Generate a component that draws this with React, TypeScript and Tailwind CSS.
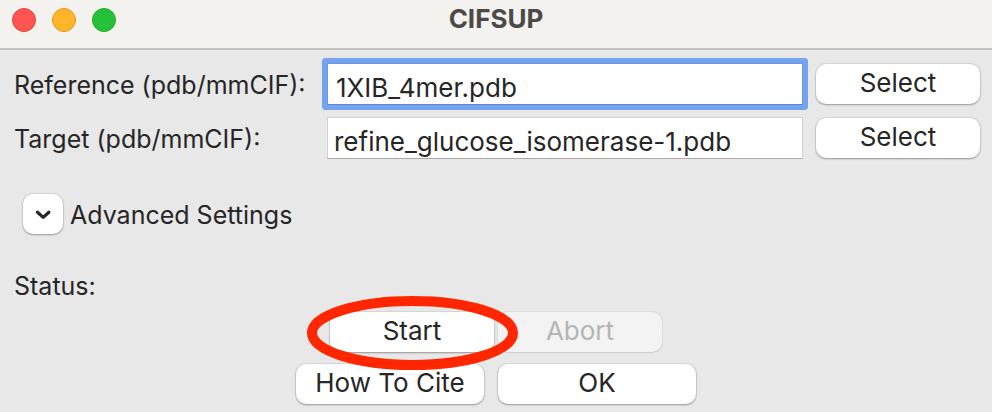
import type { ReactNode } from "react";

const labelText = "pt-0.5 text-[25px] leading-8 text-[#262626]";

function PushButton({
  children,
  className = "",
  disabled = false,
  label,
}: {
  children: ReactNode;
  className?: string;
  disabled?: boolean;
  label?: string;
}) {
  const tone = disabled
    ? "bg-[#f3f3f3] text-[#b5b5b5] shadow-[0_0_1px_1px_rgba(0,0,0,0.05),0_1px_1px_rgba(0,0,0,0.08)]"
    : "bg-white text-[#262626] shadow-[0_0_1px_1px_rgba(0,0,0,0.07),0_1px_2px_rgba(0,0,0,0.3)]";
  return (
    <button
      type="button"
      disabled={disabled}
      aria-label={label}
      className={`flex h-10 items-center justify-center rounded-[10px] pb-0.5 text-[26px] leading-8 ${tone} ${className}`}
    >
      {children}
    </button>
  );
}

function FileRow({
  id,
  label,
  value,
  focused = false,
}: {
  id: string;
  label: string;
  value: string;
  focused?: boolean;
}) {
  const frame = focused
    ? "border border-[#6699ec] border-b-[#5587d3] pl-2 shadow-[0_0_0_5px_#76a3ee] rounded-[1px]"
    : "border border-[#d2d2d2] border-b-[#a9a9a9] pl-1.5";
  return (
    <div className="grid grid-cols-[313px_minmax(0,1fr)_164px] items-center">
      <label htmlFor={id} className={`whitespace-nowrap ${labelText}`}>
        {label}
      </label>
      <input
        id={id}
        type="text"
        defaultValue={value}
        className={`mr-[13px] h-[42px] bg-white pt-1.5 pr-1.5 text-[26px] leading-8 text-[#262626] outline-none ${frame}`}
      />
      <PushButton>Select</PushButton>
    </div>
  );
}

export default function App() {
  return (
    <div className="flex min-h-screen flex-col bg-[#e8e8e8] font-['Inter','Liberation_Sans',sans-serif]">
      <header className="grid h-[50px] grid-cols-[1fr_auto_1fr] items-start border-b-2 border-[#c3c4c2] bg-[#f3f2ee]">
        <div className="flex gap-4 pt-2 pl-3">
          <button type="button" aria-label="Close" className="size-6 rounded-full border border-[#e0443e] bg-[#ff5450]" />
          <button type="button" aria-label="Minimize" className="size-6 rounded-full border border-[#dc9a26] bg-[#ffb52b]" />
          <button type="button" aria-label="Zoom" className="size-6 rounded-full border border-[#1dab2e] bg-[#26c139]" />
        </div>
        <h1 className="pt-[3px] text-[26px] leading-8 font-bold text-[#4b4a49]">CIFSUP</h1>
      </header>

      <main className="pt-[13px] pr-3 pl-[14px]">
        <div className="flex flex-col gap-3">
          <FileRow id="reference" label="Reference (pdb/mmCIF):" value="1XIB_4mer.pdb" focused />
          <FileRow id="target" label="Target (pdb/mmCIF):" value="refine_glucose_isomerase-1.pdb" />
        </div>

        <div className="mt-[35px] flex items-center gap-[7px] pl-[9px]">
          <PushButton className="w-10" label="Show advanced settings">
            <svg viewBox="0 0 40 40" className="mt-0.5 size-10" fill="none" stroke="currentColor" strokeWidth="3.2" strokeLinecap="round" strokeLinejoin="round">
              <path d="M14.5 18.2 20.2 23.4 25.9 18.2" />
            </svg>
          </PushButton>
          <span className={labelText}>Advanced Settings</span>
        </div>

        <p className={`mt-[34px] ${labelText}`}>Status:</p>
      </main>

      <footer className="flex flex-col gap-3 pt-[10px] pb-2">
        <div className="flex justify-center gap-1">
          <div className="relative">
            <PushButton className="w-[164px]">Start</PushButton>
            <svg
              viewBox="0 0 212 76"
              aria-hidden="true"
              className="pointer-events-none absolute -top-[17px] -left-6 z-10 h-[76px] w-[212px] max-w-none"
            >
              <ellipse cx="106.5" cy="38" rx="100.5" ry="32" fill="none" stroke="#ff2600" strokeWidth="10" />
            </svg>
          </div>
          <PushButton className="w-[164px]" disabled>
            Abort
          </PushButton>
        </div>
        <div className="flex justify-center gap-[14px]">
          <PushButton className="w-[188px]">How To Cite</PushButton>
          <PushButton className="w-[198px]">OK</PushButton>
        </div>
      </footer>
    </div>
  );
}
